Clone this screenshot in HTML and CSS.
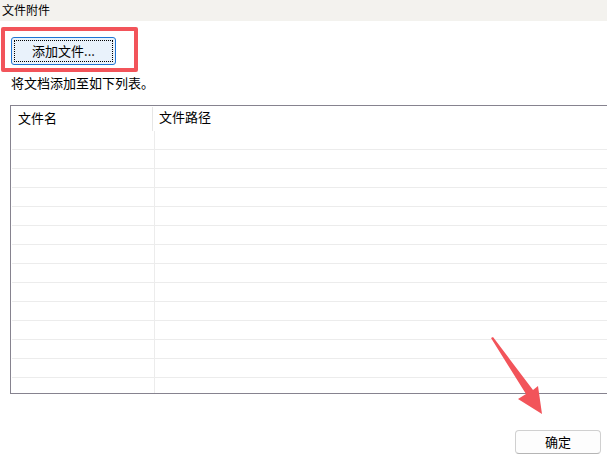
FILE: index.html
```html
<!DOCTYPE html>
<html>
<head>
<meta charset="utf-8">
<link rel="stylesheet" href="styles.css">
</head>
<body>
<div class="page">
  <div class="titlebar">文件附件</div>
  <div class="highlight">
    <button class="add-btn"><span class="focus">添加文件...</span></button>
  </div>
  <div class="hint">将文档添加至如下列表。</div>
  <div class="table">
    <div class="thead">
      <div class="th th-name">文件名</div>
      <div class="th th-path">文件路径</div>
    </div>
    <div class="tbody">
      <div class="row"><div class="c1"></div><div class="c2"></div></div>
      <div class="row"><div class="c1"></div><div class="c2"></div></div>
      <div class="row"><div class="c1"></div><div class="c2"></div></div>
      <div class="row"><div class="c1"></div><div class="c2"></div></div>
      <div class="row"><div class="c1"></div><div class="c2"></div></div>
      <div class="row"><div class="c1"></div><div class="c2"></div></div>
      <div class="row"><div class="c1"></div><div class="c2"></div></div>
      <div class="row"><div class="c1"></div><div class="c2"></div></div>
      <div class="row"><div class="c1"></div><div class="c2"></div></div>
      <div class="row"><div class="c1"></div><div class="c2"></div></div>
      <div class="row"><div class="c1"></div><div class="c2"></div></div>
      <div class="row"><div class="c1"></div><div class="c2"></div></div>
      <div class="row"><div class="c1"></div><div class="c2"></div></div>
      <div class="row"><div class="c1"></div><div class="c2"></div></div>
    </div>
  </div>
  <div class="footer">
    <button class="ok-btn">确定</button>
  </div>
  <svg class="arrow" width="607" height="464" viewBox="0 0 607 464">
    <polygon points="491,338 493,337 533,390 538,386 542,414 518,399 526,394" fill="#f2545a"/>
  </svg>
</div>
</body>
</html>
```

FILE: styles.css
```css
html, body {
  margin: 0;
  padding: 0;
  background: #ffffff;
}
body {
  font-family: "Noto Sans CJK SC", "Noto Sans", sans-serif;
  font-size: 13px;
  color: #000;
}
.page {
  position: relative;
  width: 607px;
  height: 464px;
  overflow: hidden;
}
.titlebar {
  height: 21px;
  line-height: 20px;
  font-size: 12px;
  background: #f3f2ee;
  padding-left: 2px;
}
.highlight {
  margin: 6px 0 0 1px;
  width: 123px;
  height: 31px;
  border: 4px solid #f2545a;
  border-radius: 2px;
  padding: 6px 0 0 6px;
  box-sizing: content-box;
}
.add-btn {
  display: block;
  width: 105px;
  height: 28px;
  margin: 0;
  padding: 2px;
  border: 1px solid #1f74d3;
  border-radius: 3px;
  background: #e9f2fb;
  box-sizing: border-box;
  font-family: inherit;
  font-size: 13px;
  color: #000;
}
.focus {
  display: flex;
  align-items: center;
  justify-content: center;
  height: 100%;
  border: 1px dotted #000;
  box-sizing: border-box;
  padding-bottom: 1px;
}
.hint {
  margin: 1px 0 0 11px;
  height: 20px;
  line-height: 20px;
}
.table {
  margin: 12px 0 0 10px;
  height: 287px;
  border: 1px solid #86838f;
  border-right: none;
  overflow: hidden;
}
.thead {
  display: flex;
  height: 25px;
}
.th {
  line-height: 22px;
}
.th-name {
  width: 142px;
  padding-left: 7px;
  box-sizing: border-box;
  margin-top: 1px;
  border-right: 1px solid #e6e6e6;
}
.th-path {
  padding-left: 6px;
}
.tbody {
  padding-left: 1px;
}
.row {
  display: flex;
  height: 18px;
  border-bottom: 1px solid #ececec;
}
.c1 {
  width: 142px;
  border-right: 1px solid #ececec;
}
.c2 {
  flex: 1;
}
.footer {
  display: flex;
  justify-content: flex-end;
  padding: 36px 6px 0 0;
}
.ok-btn {
  width: 86px;
  height: 24px;
  margin: 0;
  padding: 0 0 1px 0;
  border: 1px solid #d0d0d0;
  border-bottom-color: #b5b5b5;
  border-radius: 4px;
  background: #fdfdfd;
  font-family: inherit;
  font-size: 13px;
  color: #000;
}
.arrow {
  position: absolute;
  left: 0;
  top: 0;
  pointer-events: none;
}
```
